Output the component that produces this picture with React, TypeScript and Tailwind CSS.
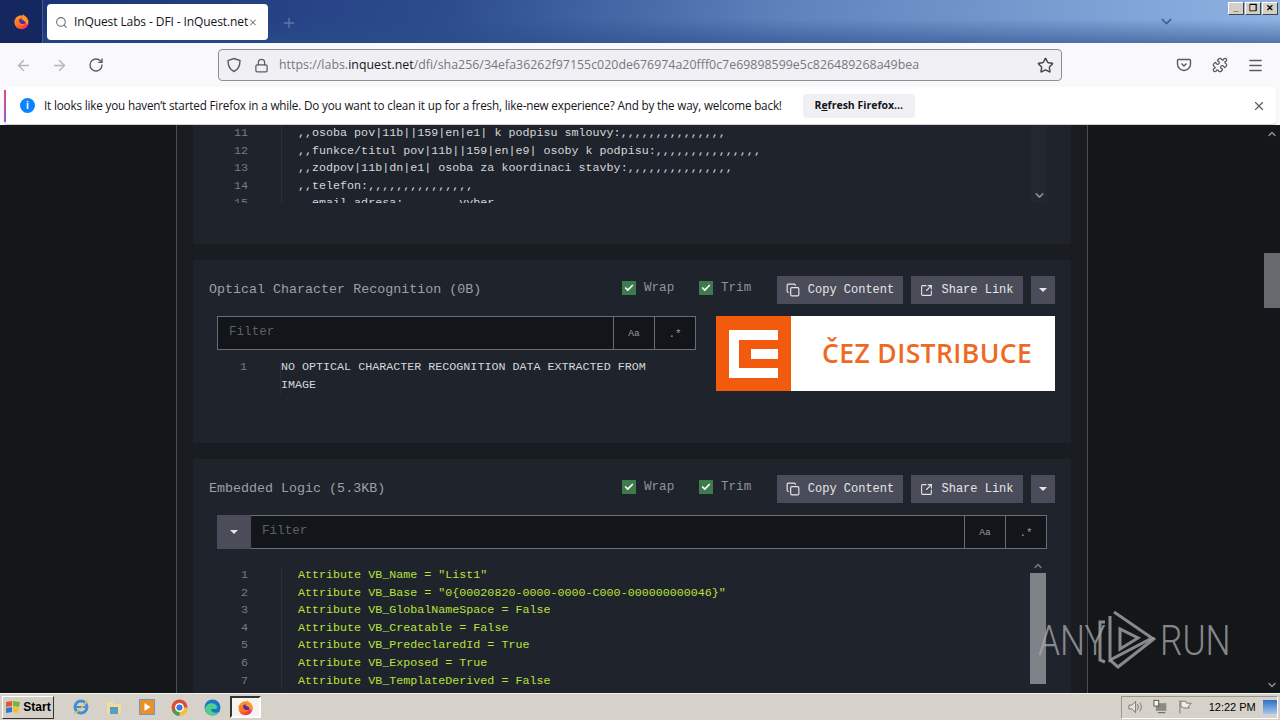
import React from "react";
import { ArrowLeft, ArrowRight, RotateCw, Lock, Star, Puzzle, Menu, X, Plus, ChevronDown, ChevronUp, Check, Copy, SquareArrowOutUpRight, Search } from "lucide-react";

const mono = "font-['Liberation_Mono',monospace]";

function Row({ n, text, color = "text-[#d5d7da]" }: { n: number; text: string; color?: string }) {
  return (
    <div className="flex h-[17.6px] items-center">
      <div className="w-[64px] pr-[33px] text-right text-[#767b82]">{n}</div>
      <div className={`whitespace-pre border-l border-[#2a2e36] pl-[16px] ${color}`}>{text}</div>
    </div>
  );
}

function Caret() {
  return <div className="h-0 w-0 border-x-[4px] border-t-[4px] border-x-transparent border-t-[#e6e6e8]" />;
}

function Check2({ label, w }: { label: string; w: string }) {
  return (
    <div className={`flex items-center gap-[8px] ${w} -mt-[3px]`}>
      <div className="flex h-[14px] w-[14px] items-center justify-center bg-[#3d7a4c]">
        <Check size={10} strokeWidth={4} className="text-white" />
      </div>
      <span className={`text-[12.6px] text-[#8f9399] ${mono}`}>{label}</span>
    </div>
  );
}

function Btn({ icon, label, w }: { icon: React.ReactNode; label: string; w: string }) {
  return (
    <div className={`flex h-[28px] items-center justify-center gap-[8px] bg-[#4a4d59] text-[12px] text-[#e4e5e7] ${mono} ${w}`}>
      {icon}
      <span>{label}</span>
    </div>
  );
}

function Header({ title }: { title: string }) {
  return (
    <div className="flex h-[30px] items-center">
      <div className={`flex-1 text-[13.35px] text-[#9da1a7] ${mono}`}>{title}</div>
      <Check2 label="Wrap" w="w-[77px]" />
      <Check2 label="Trim" w="w-[78px]" />
      <Btn icon={<Copy size={14} />} label="Copy Content" w="w-[126px]" />
      <Btn icon={<SquareArrowOutUpRight size={13} />} label="Share Link" w="w-[112px] ml-2" />
      <div className="ml-2 flex h-[28px] w-[24px] items-center justify-center bg-[#4a4d59]">
        <Caret />
      </div>
    </div>
  );
}

function FilterCells() {
  return (
    <>
      <div className="flex w-[41px] items-center justify-center border-l border-[#6a6d72] pt-[2px] text-[9.5px] text-[#9a9da2]">Aa</div>
      <div className="flex w-[41px] items-center justify-center border-l border-[#6a6d72] pt-[2px] text-[11px] text-[#9a9da2]">.*</div>
    </>
  );
}

function Firefox({ size, id }: { size: number; id: string }) {
  return (
    <svg width={size} height={size} viewBox="0 0 24 24">
      <defs>
        <linearGradient id={id} x1="0" y1="0" x2="1" y2="1">
          <stop offset="0" stopColor="#ffbd2e" />
          <stop offset="0.55" stopColor="#ff5a2c" />
          <stop offset="1" stopColor="#e31587" />
        </linearGradient>
      </defs>
      <circle cx="12" cy="13" r="10" fill={`url(#${id})`} />
      <circle cx="12.5" cy="12.5" r="4.8" fill="#5a2ca8" />
      <path d="M14 1c2 3 5 4 7 9 1 3 0 6-1 7-1-4-4-7-8-8 2-2 3-5 2-8z" fill="#ff9a1f" />
      <path d="M3 9c0 5 3 9 8 9 3 0 5-1 6-3-2 1-5 1-7-1-1-1-2-3-1-4-2 0-4-1-6-1z" fill="#ff7a1a" />
    </svg>
  );
}

function TaskIcon({ children, active }: { children: React.ReactNode; active?: boolean }) {
  return (
    <div className={`flex h-[22px] w-[31px] items-center justify-center ${active ? "border-2 border-b-white border-l-[#333] border-r-white border-t-[#333] bg-[#f5f4f0]" : ""}`}>
      {children}
    </div>
  );
}

export default function App() {
  return (
    <div className="flex h-[720px] w-[1280px] flex-col overflow-hidden bg-[#14171a] font-['Liberation_Sans',sans-serif]">
      {/* Title bar */}
      <div className="relative flex h-[43px] shrink-0 items-end bg-[linear-gradient(100deg,#1a3276_0%,#2c4c8e_35%,#5f84bd_62%,#8fb3e2_100%)]">
        <div className="absolute inset-x-0 bottom-0 h-[24px] bg-gradient-to-b from-transparent to-[#2b4d8a]/60" />
        <div className="relative flex h-full w-[43px] items-center justify-center border-r border-[#3d5b96] bg-[#14285f]">
          <Firefox size={17} id="ffa" />
        </div>
        <div className="relative mb-[3px] ml-[4px] flex h-[36px] w-[221px] items-center rounded-[4px] bg-white pl-[8px] font-['Open_Sans',sans-serif] text-[12px] text-[#15141a]">
          <Search size={17} className="text-[#6f6f74]" />
          <span className="ml-[6px] flex-1 whitespace-nowrap tracking-[-0.1px]">InQuest Labs - DFI - InQuest.net</span>
          <X size={13} className="mr-[10px] text-[#333]" />
        </div>
        <Plus size={16} className="relative mb-[12px] ml-[13px] text-[#5878a8]" />
        <ChevronDown size={17} className="absolute left-[1158px] top-[13px] text-[#3d5f94]" />
        <div className="absolute right-[2px] top-[2px] flex gap-[1px]">
          {["_", "❐", "✕"].map((c, i) => (
            <div key={i} className="flex h-[13px] w-[16px] items-center justify-center border border-b-[#444] border-l-white border-r-[#444] border-t-white bg-[#d4d0c8] text-[9px] font-bold leading-none text-black">
              {c}
            </div>
          ))}
        </div>
      </div>

      {/* Toolbar */}
      <div className="flex h-[44px] shrink-0 items-center bg-[#f9f9fb] text-[#5b5b66]">
        <ArrowLeft size={17} className="ml-[15px] text-[#b5b5ba]" />
        <ArrowRight size={17} className="ml-[19px] text-[#b5b5ba]" />
        <RotateCw size={16} className="ml-[20px] text-[#5b5b66]" />
        <div className="ml-[114px] flex h-[32px] w-[844px] items-center rounded-[4px] border border-[#8f8f94] bg-[#f0f0f4]">
          <svg width="16" height="16" viewBox="0 0 16 16" fill="none" stroke="#5b5b66" strokeWidth="1.4" className="ml-[7px]">
            <path d="M8 1.500 14 3.500c0 5-1.500 9-6 11-4.500-2-6-6-6-11z" />
          </svg>
          <Lock size={15} className="ml-[12px]" />
          <div className="ml-[10px] flex-1 whitespace-nowrap font-['Open_Sans',sans-serif] text-[12.35px] tracking-[0.03px] text-[#77777f]">
            https://labs.<span className="text-[#15141a]">inquest.net</span>/dfi/sha256/34efa36262f97155c020de676974a20fff0c7e69898599e5c826489268a49bea
          </div>
          <Star size={17} className="mr-[7px] text-[#444]" />
        </div>
        <svg width="16" height="16" viewBox="0 0 16 16" fill="none" stroke="#5b5b66" strokeWidth="1.4" className="ml-[114px]">
          <path d="M2.500 2.500h11a1 1 0 0 1 1 1V7a6.500 6.500 0 0 1-13 0V3.500a1 1 0 0 1 1-1z" />
          <path d="M5.500 6.500 8 9l2.500-2.500" />
        </svg>
        <Puzzle size={16} className="ml-[20px]" />
        <Menu size={17} className="ml-[19px]" />
      </div>

      {/* Notification */}
      <div className="flex h-[38px] shrink-0 items-stretch bg-[#f9f9fb] px-[4px] pb-[1px]">
        <div className="flex flex-1 items-center rounded-[4px] bg-white shadow-[0_1px_1px_#ccc]">
          <div className="h-[32px] w-[2px] bg-gradient-to-b from-[#e0457b] to-[#8a5ad6]" />
          <div className="ml-[14px] flex h-[15px] w-[15px] items-center justify-center rounded-full bg-[#0a84ff]">
            <span className="text-[10px] font-bold leading-none text-white">i</span>
          </div>
          <span className="ml-[9px] whitespace-nowrap font-['Open_Sans',sans-serif] text-[11.7px] tracking-[-0.17px] text-[#15141a]">
            It looks like you haven’t started Firefox in a while. Do you want to clean it up for a fresh, like-new experience? And by the way, welcome back!
          </span>
          <div className="ml-[21px] flex h-[24px] w-[112px] items-center justify-center rounded-[4px] bg-[#f0f0f4] font-['Open_Sans',sans-serif] text-[10.5px] font-bold text-[#15141a]">
            R<span className="underline">e</span>fresh Firefox...
          </div>
          <div className="flex-1" />
          <X size={14} className="mr-[10px] text-[#5b5b66]" />
        </div>
      </div>

      {/* Content */}
      <div className="relative min-h-0 flex-1 overflow-hidden bg-[#14171a]">
        <div className="ml-[176px] flex h-full w-[912px] flex-col gap-[16px] border-x border-[#4a4d52] bg-[#191c21] px-[16px]">
          {/* Card 1 */}
          <div className={`relative h-[119px] shrink-0 bg-[#1f232b] pl-[24px] text-[11.7px] ${mono}`}>
            <div className="h-[78px] overflow-hidden">
              <Row n={11} text=",,osoba pov|11b||159|en|e1| k podpisu smlouvy:,,,,,,,,,,,,,,," />
              <Row n={12} text=",,funkce/titul pov|11b||159|en|e9| osoby k podpisu:,,,,,,,,,,,,,,," />
              <Row n={13} text=",,zodpov|11b|dn|e1| osoba za koordinaci stavby:,,,,,,,,,,,,,,," />
              <Row n={14} text=",,telefon:,,,,,,,,,,,,,,," />
              <Row n={15} text=",,email adresa:,,,,,,,,vyber" />
            </div>
            <div className="absolute right-[24px] top-0 flex h-[78px] w-[16px] items-end justify-center bg-[#23272f] pb-[1px]">
              <ChevronDown size={13} strokeWidth={3} className="text-[#8a8d92]" />
            </div>
          </div>

          {/* Card 2 */}
          <div className="h-[183px] shrink-0 bg-[#1f232b] px-[16px] pt-[15px]">
            <Header title="Optical Character Recognition (0B)" />
            <div className="mt-[11px] flex pl-[8px]">
              <div className="w-[479px]">
                <div className={`flex h-[34px] border border-[#6a6d72] bg-[#12151a] ${mono}`}>
                  <div className="flex-1 pl-[11px] text-[12.6px] leading-[31px] text-[#5c6066]">Filter</div>
                  <FilterCells />
                </div>
                <div className={`mt-[9px] flex text-[11.7px] leading-[17.5px] text-[#d5d7da] ${mono}`}>
                  <div className="w-[30px] text-right text-[#767b82]">1</div>
                  <div className="ml-[33px] flex-1 border-l border-[#2a2e36]">
                    NO OPTICAL CHARACTER RECOGNITION DATA EXTRACTED FROM<br />IMAGE
                  </div>
                </div>
              </div>
              <div className="ml-[20px] flex h-[75px] w-[339px] overflow-hidden bg-white">
                <div className="flex h-[75px] w-[75px] shrink-0 items-center justify-center bg-[#f25a0d]">
                  <svg width="49" height="48" viewBox="0 0 49 48" fill="none" stroke="white" strokeWidth="10">
                    <path d="M49 5H5v38h44" />
                    <path d="M22 24h27" />
                  </svg>
                </div>
                <div className="ml-[31px] whitespace-nowrap pt-[19px] font-['Open_Sans',sans-serif] text-[26.5px] font-semibold leading-[36px] tracking-[0.4px] text-[#ee6a24]">
                  ČEZ DISTRIBUCE
                </div>
              </div>
            </div>
          </div>

          {/* Card 3 */}
          <div className="relative flex-1 bg-[#1f232b] px-[16px] pt-[15px]">
            <Header title="Embedded Logic (5.3KB)" />
            <div className="ml-[8px] mt-[11px] flex h-[34px] w-[830px] border border-[#6a6d72] bg-[#12151a]">
              <div className="-my-px -ml-px flex w-[34px] items-center justify-center bg-[#4a4d59]"><Caret /></div>
              <div className={`flex-1 pl-[11px] text-[12.6px] leading-[31px] text-[#5c6066] ${mono}`}>Filter</div>
              <div className={`flex ${mono}`}><FilterCells /></div>
            </div>
            <div className={`mt-[18px] pl-[8px] text-[11.7px] ${mono}`}>
              <Row n={1} color="text-[#b8e23c]" text={'Attribute VB_Name = "List1"'} />
              <Row n={2} color="text-[#b8e23c]" text={'Attribute VB_Base = "0{00020820-0000-0000-C000-000000000046}"'} />
              <Row n={3} color="text-[#b8e23c]" text="Attribute VB_GlobalNameSpace = False" />
              <Row n={4} color="text-[#b8e23c]" text="Attribute VB_Creatable = False" />
              <Row n={5} color="text-[#b8e23c]" text="Attribute VB_PredeclaredId = True" />
              <Row n={6} color="text-[#b8e23c]" text="Attribute VB_Exposed = True" />
              <Row n={7} color="text-[#b8e23c]" text="Attribute VB_TemplateDerived = False" />
            </div>
            <div className="absolute left-[837px] top-[100px] flex h-[125px] w-[16px] flex-col items-center">
              <ChevronUp size={12} strokeWidth={3} className="h-[14px] text-[#777a80]" />
              <div className="w-full flex-1 bg-[#7e8186]" />
            </div>
          </div>
        </div>

        {/* Page scrollbar */}
        <div className="absolute right-0 top-0 flex h-full w-[16px] flex-col items-center">
          <ChevronUp size={12} strokeWidth={3} className="mt-[3px] text-[#8a8d92]" />
          <div className="mt-[113px] h-[55px] w-full bg-[#66696d]" />
          <div className="flex-1" />
          <ChevronDown size={12} strokeWidth={3} className="mb-[2px] text-[#8a8d92]" />
        </div>

        {/* Watermark */}
        <div className="absolute left-[1038px] top-[484px] flex h-[62px] items-center font-['Roboto',sans-serif] text-[43px] font-light leading-none text-[#a4a6a8]/80">
          <span className="w-[59px] origin-left scale-x-[0.82]">ANY</span>
          <svg width="62" height="62" viewBox="0 0 62 62" fill="none" stroke="#a4a6a8" strokeOpacity="0.8" strokeWidth="3">
            <path d="M8 13H3v38l5 2" />
            <path d="M13 7v44l42-22L17 3" />
            <path d="M13 51l8 7 37-29" />
            <path d="M23 20v20l18-11z" />
          </svg>
          <span className="ml-[1px] w-[60px] origin-left scale-x-[0.82]">RUN</span>
        </div>
      </div>

      {/* Taskbar */}
      <div className="flex h-[27px] shrink-0 items-center border-t border-[#f3f2ec] bg-[#d6d2c9] pl-[2px]">
        <div className="flex h-[23px] w-[52px] items-center justify-center gap-[2px] border border-b-[#333] border-l-white border-r-[#333] border-t-white bg-[#d4d0c8] text-[12px] font-bold text-black">
          <svg width="16" height="14" viewBox="0 0 16 14">
            <path d="M1 2 7 1v5L1 7z" fill="#e8552a" />
            <path d="M8 1l7 1-1 5-6-1z" fill="#7ab52d" />
            <path d="M1 8l6-1v5l-6 1z" fill="#2f77d4" />
            <path d="M8 7l6 1-1 5-5-1z" fill="#f5c022" />
          </svg>
          Start
        </div>
        <div className="ml-[11px] flex items-center gap-[2px]">
          <TaskIcon>
            <svg width="18" height="18" viewBox="0 0 18 18" fill="none"><circle cx="9" cy="9" r="6" stroke="#3f8fd8" strokeWidth="3" /><path d="M4 9h10" stroke="#3f8fd8" strokeWidth="2" /><path d="M2 15C5 15 14 6 15 2" stroke="#e5c14a" strokeWidth="1.500" /></svg>
          </TaskIcon>
          <TaskIcon>
            <svg width="18" height="16" viewBox="0 0 18 16"><path d="M2 3h6l1 2h7v10H2z" fill="#efdca0" /><path d="M5 8h8v7H5z" fill="#5a9dc0" /></svg>
          </TaskIcon>
          <TaskIcon>
            <svg width="16" height="16" viewBox="0 0 16 16"><rect x="0.500" y="0.500" width="15" height="15" fill="#e8902c" stroke="#6e97c2" /><path d="M5.500 4v8l6-4z" fill="white" /></svg>
          </TaskIcon>
          <TaskIcon>
            <svg width="17" height="17" viewBox="0 0 17 17"><circle cx="8.500" cy="8.500" r="8" fill="#e04a3a" /><path d="M8.500 8.500 1.500 12.500a8 8 0 0 0 7 4.500z" fill="#3aa757" /><path d="M8.500 8.500v8.500a8 8 0 0 0 8-8.500z" fill="#f4c430" /><circle cx="8.500" cy="8.500" r="3.800" fill="#3b78d8" stroke="white" strokeWidth="1.400" /></svg>
          </TaskIcon>
          <TaskIcon>
            <svg width="17" height="17" viewBox="0 0 17 17"><circle cx="8.500" cy="8.500" r="8" fill="#1a76c8" /><path d="M1 10C2 4 9 3 12 6c2 2 1 4-1 4H7c0 3 4 5 8 3-2 3-6 4-9 3-3-1-5-3-5-6z" fill="#4ed08a" /></svg>
          </TaskIcon>
          <TaskIcon active><Firefox size={17} id="ffb" /></TaskIcon>
        </div>
        <div className="flex-1" />
        <div className="mr-[2px] flex h-[23px] w-[157px] items-center border-b border-l border-r border-t border-b-white border-l-[#9a978f] border-r-white border-t-[#9a978f] pl-[6px] text-[11px] text-black">
          <svg width="16" height="14" viewBox="0 0 16 14" fill="none" stroke="#77756f"><path d="M1 5h3l4-4v12l-4-4H1z" fill="#e3e1da" /><path d="M10 4c1 2 1 4 0 6M12.500 2.500c2 3 2 6 0 9" /></svg>
          <svg width="16" height="16" viewBox="0 0 16 16" className="ml-[10px]"><rect x="3" y="4" width="11" height="8" fill="#8a8a84" /><rect x="1" y="1" width="5" height="6" fill="#f5f5f0" stroke="#55554f" /><path d="M5 14h8" stroke="#55554f" /></svg>
          <svg width="16" height="16" viewBox="0 0 16 16" fill="none" stroke="#77756f" className="ml-[10px]"><path d="M2 1v14" /><path d="M3 2h5l1 2h5l-3 3 1 2H6L5 8H3z" fill="#f0eee8" /></svg>
          <span className="ml-[15px] whitespace-nowrap">12:22 PM</span>
          <div className="ml-[7px] h-[14px] w-[15px] bg-gradient-to-b from-[#2b6fc4] to-[#a6c6ec]" />
        </div>
      </div>
    </div>
  );
}
